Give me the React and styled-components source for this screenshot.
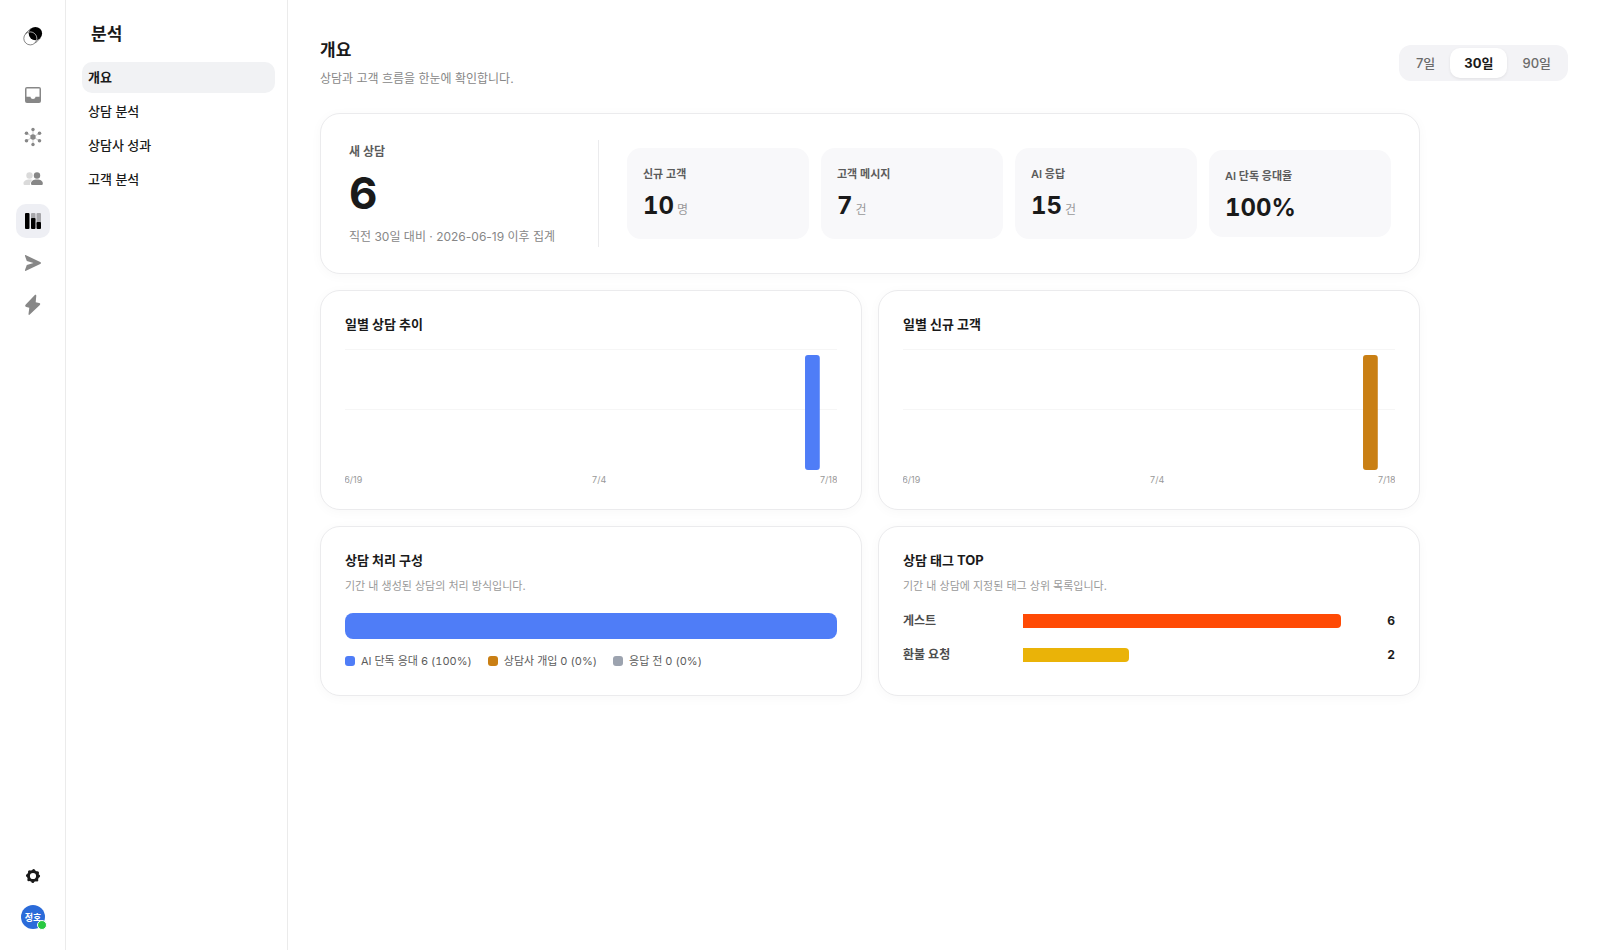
import React, { useState } from 'react';
import styled, { createGlobalStyle } from 'styled-components';

const GlobalStyle = createGlobalStyle`
	* {
		box-sizing: border-box;
	}
	body {
		margin: 0;
		background: #fff;
		color: #1a1a1a;
		font-family: Inter, 'Noto Sans CJK KR', sans-serif;
		font-size: 13px;
	}
	button {
		font-family: inherit;
		border: 0;
		padding: 0;
		background: none;
		cursor: pointer;
	}
	h1, h2, h3, p, ul, dl, dd {
		margin: 0;
		padding: 0;
	}
	ul {
		list-style: none;
	}
`;

const Layout = styled.div`
	display: flex;
	min-height: 100vh;
`;

const Rail = styled.nav`
	flex: none;
	width: 66px;
	padding: 24px 15px 21px 16px;
	border-right: 1px solid #ebebeb;
	display: flex;
	flex-direction: column;
	align-items: center;
`;

const Logo = styled.a`
	display: flex;
	height: 24px;
	margin-bottom: 30px;
	align-items: center;
`;

const RailList = styled.div`
	display: flex;
	flex-direction: column;
	gap: 8px;
	flex: 1;
`;

const RailButton = styled.button`
	display: flex;
	align-items: center;
	justify-content: center;
	width: 34px;
	height: 34px;
	border-radius: 10px;
	color: ${(props) => (props.$dark ? '#1a1a1a' : '#878787')};
	background: ${(props) => (props.$active ? '#eeeff4' : 'transparent')};
`;

const Avatar = styled.button`
	position: relative;
	width: 24px;
	height: 24px;
	margin-top: 12px;
	border-radius: 50%;
	background: #2b6bd9;
	color: #fff;
	font-size: 9px;
	font-weight: 700;
	white-space: nowrap;
	&::after {
		content: '';
		position: absolute;
		right: -2px;
		bottom: -1px;
		width: 8px;
		height: 8px;
		border: 1px solid #fff;
		border-radius: 50%;
		background: #28c840;
	}
`;

const Sidebar = styled.aside`
	flex: none;
	width: 222px;
	padding: 20px 12px 20px 16px;
	border-right: 1px solid #ebebeb;
`;

const SidebarTitle = styled.h2`
	padding-left: 9px;
	margin-bottom: 14px;
	font-size: 17px;
	line-height: 28px;
	font-weight: 600;
`;

const Menu = styled.ul`
	display: flex;
	flex-direction: column;
	gap: 3px;
`;

const MenuLink = styled.a`
	display: block;
	padding: 0 6px;
	border-radius: 10px;
	color: #1a1a1a;
	font-size: 13px;
	line-height: 31px;
	text-decoration: none;
	font-weight: ${(props) => (props.$active ? 600 : 500)};
	background: ${(props) => (props.$active ? '#f1f2f4' : 'transparent')};
`;

const Main = styled.main`
	flex: 1;
	min-width: 0;
	padding: 36px 32px;
`;

const Header = styled.header`
	display: flex;
	align-items: center;
	justify-content: space-between;
	margin-bottom: 24px;
`;

const PageTitle = styled.h1`
	font-size: 17px;
	line-height: 28px;
	font-weight: 600;
`;

const PageText = styled.p`
	margin-top: 4px;
	color: #878787;
	font-size: 12px;
	line-height: 21px;
`;

const Segment = styled.div`
	display: flex;
	gap: 1px;
	padding: 3px;
	border-radius: 12px;
	background: #f3f3f6;
`;

const SegmentButton = styled.button`
	height: 30px;
	padding: 0 14px;
	border-radius: 10px;
	font-size: 13px;
	font-weight: ${(props) => (props.$active ? 700 : 500)};
	color: ${(props) => (props.$active ? '#1a1a1a' : '#6b6b6b')};
	background: ${(props) => (props.$active ? '#fff' : 'transparent')};
	box-shadow: ${(props) => (props.$active ? '0 1px 3px rgba(0, 0, 0, 0.08)' : 'none')};
`;

const Cards = styled.div`
	display: grid;
	grid-template-columns: repeat(2, minmax(0, 1fr));
	gap: 16px;
	max-width: 1100px;
`;

const Card = styled.section`
	padding: 24px;
	border: 1px solid #ebebed;
	border-radius: 20px;
	background: #fff;
	box-shadow: 0 2px 12px rgba(0, 0, 0, 0.03);
`;

const SummaryCard = styled(Card)`
	grid-column: 1 / -1;
	display: flex;
	gap: 28px;
	padding: 26px 28px;
`;

const Hero = styled.div`
	flex: 0 0 250px;
	border-right: 1px solid #ebebed;
`;

const HeroLabel = styled.h2`
	color: #5c5c5c;
	font-size: 12px;
	line-height: 24px;
	font-weight: 600;
`;

const HeroValue = styled.p`
	margin: 5px 0 9px;
	font-size: 44px;
	line-height: 48px;
	font-weight: 700;
	font-variant-numeric: tabular-nums;
`;

const HeroText = styled.p`
	color: #878787;
	font-size: 12px;
	line-height: 21px;
`;

const Tiles = styled.dl`
	flex: 1;
	display: grid;
	grid-template-columns: repeat(4, minmax(0, 1fr));
	align-items: center;
	gap: 12px;
`;

const Tile = styled.div`
	padding: 17px 16px 15px;
	border-radius: 14px;
	background: #f8f8fa;
	dt {
		color: #5c5c5c;
		font-size: 11px;
		line-height: 18px;
		font-weight: 600;
	}
	dd {
		display: flex;
		align-items: baseline;
		gap: 3px;
		margin-top: 8px;
		font-size: 24px;
		line-height: 29px;
		font-weight: 700;
		font-variant-numeric: tabular-nums;
	}
	small {
		color: #999;
		font-size: 12px;
		font-weight: 400;
	}
`;

const CardTitle = styled.h3`
	font-size: 13px;
	line-height: 18px;
	font-weight: 700;
`;

const CardText = styled.p`
	margin-top: 8px;
	color: #999;
	font-size: 11px;
	line-height: 18px;
`;

const ChartSvg = styled.svg`
	display: block;
	width: 100%;
	height: 136px;
	margin-top: 16px;
	overflow: hidden;
	line {
		stroke: #f6f6f6;
	}
	text {
		fill: #999;
		font-size: 9px;
		text-anchor: middle;
	}
`;

const StackBar = styled.div`
	display: flex;
	height: 26px;
	margin-top: 18px;
	border-radius: 8px;
	overflow: hidden;
`;

const StackPart = styled.div`
	background: ${(props) => props.$color};
`;

const Legend = styled.ul`
	display: flex;
	gap: 16px;
	margin-top: 12px;
	li {
		display: flex;
		align-items: center;
		gap: 6px;
		color: #5c5c5c;
		font-size: 11px;
		line-height: 20px;
		font-variant-numeric: tabular-nums;
	}
`;

const Swatch = styled.i`
	width: 10px;
	height: 10px;
	border-radius: 3px;
	background: ${(props) => props.$color};
`;

const TagList = styled.ul`
	display: flex;
	flex-direction: column;
	gap: 14px;
	margin: 16px 0 6px;
	li {
		display: grid;
		grid-template-columns: 120px minmax(0, 1fr) 54px;
		align-items: center;
		color: #4d4d4d;
		font-size: 12px;
		line-height: 20px;
		font-weight: 600;
	}
	strong {
		color: #1a1a1a;
		font-weight: 700;
		font-variant-numeric: tabular-nums;
		text-align: right;
	}
`;

const TagBar = styled.div`
	height: 14px;
	border-radius: 0 4px 4px 0;
	background: ${(props) => props.$color};
`;

const LogoIcon = () => (
	<svg width='20' height='20' viewBox='0 0 20 20' fill='none'>
		<circle cx='12.4' cy='7.6' r='6.7' fill='#000' />
		<path d='M2.4 7.6 7.7 2.8M12.2 17.2 17.2 12.2' stroke='#333' strokeWidth='.7' />
		<circle cx='7.3' cy='12.4' r='6.5' stroke='#555' strokeWidth='.7' />
		<path d='M5.8 6.1a6.5 6.5 0 0 1 7.8 8' stroke='#bbb' strokeWidth='.7' />
	</svg>
);

const InboxIcon = () => (
	<svg width='18' height='18' viewBox='0 0 18 18' fill='currentColor'>
		<path
			fillRule='evenodd'
			d='M3 1h12a2 2 0 0 1 2 2v12a2 2 0 0 1-2 2H3a2 2 0 0 1-2-2V3a2 2 0 0 1 2-2Zm-.5 1.5v8.3h4c.2 1.4 1.2 2.2 2.5 2.2s2.3-.8 2.5-2.2h4V2.5Z'
		/>
	</svg>
);

const HubIcon = () => (
	<svg width='20' height='20' viewBox='0 0 20 20' fill='currentColor'>
		<path d='M10 10V2M10 10V18M10 10 3.5 6.3M10 10 16.5 6.3M10 10 3.5 13.7M10 10 16.5 13.7' stroke='currentColor' strokeOpacity='.4' />
		<circle cx='10' cy='10' r='2.7' />
		<circle cx='10' cy='2.5' r='1.7' />
		<circle cx='10' cy='17.5' r='1.7' />
		<circle cx='3.5' cy='6.3' r='1.8' />
		<circle cx='16.5' cy='6.3' r='1.8' />
		<circle cx='3.5' cy='13.7' r='1.8' />
		<circle cx='16.5' cy='13.7' r='1.8' />
	</svg>
);

const PeopleIcon = () => (
	<svg width='20' height='16' viewBox='0 0 20 16' fill='currentColor'>
		<g opacity='.3'>
			<circle cx='6.5' cy='4.5' r='3.2' />
			<path d='M.5 12.5c0-2.5 2.5-4 6-4 1.2 0 2 .1 2.8.4-1.5 1-2.3 2.5-2.3 5.1H2C1 14 .5 13.5.5 12.5Z' />
		</g>
		<circle cx='14' cy='4.5' r='3.2' />
		<path d='M8 12.5c0-2.5 2.5-4 6-4s5.8 1.5 5.8 4c0 1-.5 1.5-1.5 1.5H9.5C8.5 14 8 13.5 8 12.5Z' />
	</svg>
);

const ChartIcon = () => (
	<svg width='18' height='18' viewBox='0 0 18 18'>
		<g fill='#a6a6aa'>
			<rect x='7' y='1' width='4.5' height='8' rx='1' />
			<rect x='12.5' y='1' width='4.5' height='12' rx='1' />
		</g>
		<rect x='1' y='1' width='4.5' height='16' rx='1' />
		<rect x='7' y='6' width='4.5' height='11' rx='1' />
		<rect x='12.5' y='10' width='4.5' height='7' rx='1' />
	</svg>
);

const SendIcon = () => (
	<svg width='18' height='18' viewBox='0 0 18 18' fill='currentColor'>
		<path d='M2 1.2 16.2 8c1.1.5 1.1 1.5 0 2L2 16.8c-.7.3-1.2-.2-1-.9L2.8 11 9.5 9 2.8 7 1 2.1C.8 1.4 1.3.9 2 1.2Z' />
	</svg>
);

const BoltIcon = () => (
	<svg width='18' height='22' viewBox='0 0 18 22' fill='currentColor'>
		<path d='M10.6 1.2 1.8 10.6c-1 1.1-.8 1.9.5 2.300l3 .9-.8 6.100c-.1 1 .6 1.400 1.300.7l9.800-9.300c1-1 .8-1.900-.5-2.200l-3.400-.9.600-6.400c.1-1-.9-1.500-1.700-.6Z' />
	</svg>
);

const GearIcon = () => (
	<svg width='16' height='16' viewBox='0 0 16 16' fill='none' stroke='currentColor'>
		<circle cx='8' cy='8' r='4.6' strokeWidth='3' />
		<circle cx='8' cy='8' r='5.6' strokeWidth='3' strokeLinecap='round' strokeDasharray='0 4.398' />
	</svg>
);

const railItems = [
	{ label: '상담함', Icon: InboxIcon },
	{ label: '채널', Icon: HubIcon },
	{ label: '고객', Icon: PeopleIcon },
	{ label: '분석', Icon: ChartIcon },
	{ label: '메시지', Icon: SendIcon },
	{ label: '자동화', Icon: BoltIcon },
];

const menuItems = ['개요', '상담 분석', '상담사 성과', '고객 분석'];

const tiles = [
	{ label: '신규 고객', value: '10', unit: '명' },
	{ label: '고객 메시지', value: '7', unit: '건' },
	{ label: 'AI 응답', value: '15', unit: '건' },
	{ label: 'AI 단독 응대율', value: '100%' },
];

const handling = [
	{ label: 'AI 단독 응대', count: 6, percent: 100, color: '#4f7df7' },
	{ label: '상담사 개입', count: 0, percent: 0, color: '#c97f14' },
	{ label: '응답 전', count: 0, percent: 0, color: '#9ca3af' },
];

const tags = [
	{ label: '게스트', count: 6, color: '#ff4a05' },
	{ label: '환불 요청', count: 2, color: '#eab308' },
];

const DAYS = 30;
const ticks = [
	{ day: 0, label: '6/19' },
	{ day: 15, label: '7/4' },
	{ day: 29, label: '7/18' },
];

// x position inside the chart, in percent of its width
const dayX = (day) => `${(day / DAYS) * 100}%`;

function DailyChart({ title, color }) {
	return (
		<Card>
			<CardTitle>{title}</CardTitle>
			<ChartSvg role='img' aria-label={title}>
				<line x1='0' x2='100%' y1='0.5' y2='0.5' />
				<line x1='0' x2='100%' y1='60.5' y2='60.5' />
				<rect x={dayX(28.05)} y='6' width={dayX(0.9)} height='115' rx='3' fill={color} />
				{ticks.map((tick) => (
					<text key={tick.label} x={dayX(tick.day + 0.5)} y='134'>
						{tick.label}
					</text>
				))}
			</ChartSvg>
		</Card>
	);
}

export default function App() {
	const [period, setPeriod] = useState(30);
	const maxTag = Math.max(...tags.map((tag) => tag.count));
	return (
		<>
			<GlobalStyle />
			<Layout>
				<Rail>
					<Logo href='#' aria-label='홈'>
						<LogoIcon />
					</Logo>
					<RailList>
						{railItems.map(({ label, Icon }) => (
							<RailButton key={label} aria-label={label} $active={label === '분석'}>
								<Icon />
							</RailButton>
						))}
					</RailList>
					<RailButton aria-label='설정' $dark>
						<GearIcon />
					</RailButton>
					<Avatar>정호</Avatar>
				</Rail>
				<Sidebar>
					<SidebarTitle>분석</SidebarTitle>
					<Menu>
						{menuItems.map((item, i) => (
							<li key={item}>
								<MenuLink href='#' $active={i === 0}>
									{item}
								</MenuLink>
							</li>
						))}
					</Menu>
				</Sidebar>
				<Main>
					<Header>
						<div>
							<PageTitle>개요</PageTitle>
							<PageText>상담과 고객 흐름을 한눈에 확인합니다.</PageText>
						</div>
						<Segment>
							{[7, 30, 90].map((days) => (
								<SegmentButton key={days} $active={days === period} onClick={() => setPeriod(days)}>
									{days}일
								</SegmentButton>
							))}
						</Segment>
					</Header>
					<Cards>
						<SummaryCard>
							<Hero>
								<HeroLabel>새 상담</HeroLabel>
								<HeroValue>6</HeroValue>
								<HeroText>직전 30일 대비 · 2026-06-19 이후 집계</HeroText>
							</Hero>
							<Tiles>
								{tiles.map((tile) => (
									<Tile key={tile.label}>
										<dt>{tile.label}</dt>
										<dd>
											{tile.value}
											{tile.unit && <small>{tile.unit}</small>}
										</dd>
									</Tile>
								))}
							</Tiles>
						</SummaryCard>
						<DailyChart title='일별 상담 추이' color='#4f7df7' />
						<DailyChart title='일별 신규 고객' color='#c97f14' />
						<Card>
							<CardTitle>상담 처리 구성</CardTitle>
							<CardText>기간 내 생성된 상담의 처리 방식입니다.</CardText>
							<StackBar>
								{handling.map((part) => (
									<StackPart key={part.label} $color={part.color} style={{ width: `${part.percent}%` }} />
								))}
							</StackBar>
							<Legend>
								{handling.map((part) => (
									<li key={part.label}>
										<Swatch $color={part.color} />
										{part.label} {part.count} ({part.percent}%)
									</li>
								))}
							</Legend>
						</Card>
						<Card>
							<CardTitle>상담 태그 TOP</CardTitle>
							<CardText>기간 내 상담에 지정된 태그 상위 목록입니다.</CardText>
							<TagList>
								{tags.map((tag) => (
									<li key={tag.label}>
										<span>{tag.label}</span>
										<TagBar $color={tag.color} style={{ width: `${(tag.count / maxTag) * 100}%` }} />
										<strong>{tag.count}</strong>
									</li>
								))}
							</TagList>
						</Card>
					</Cards>
				</Main>
			</Layout>
		</>
	);
}
